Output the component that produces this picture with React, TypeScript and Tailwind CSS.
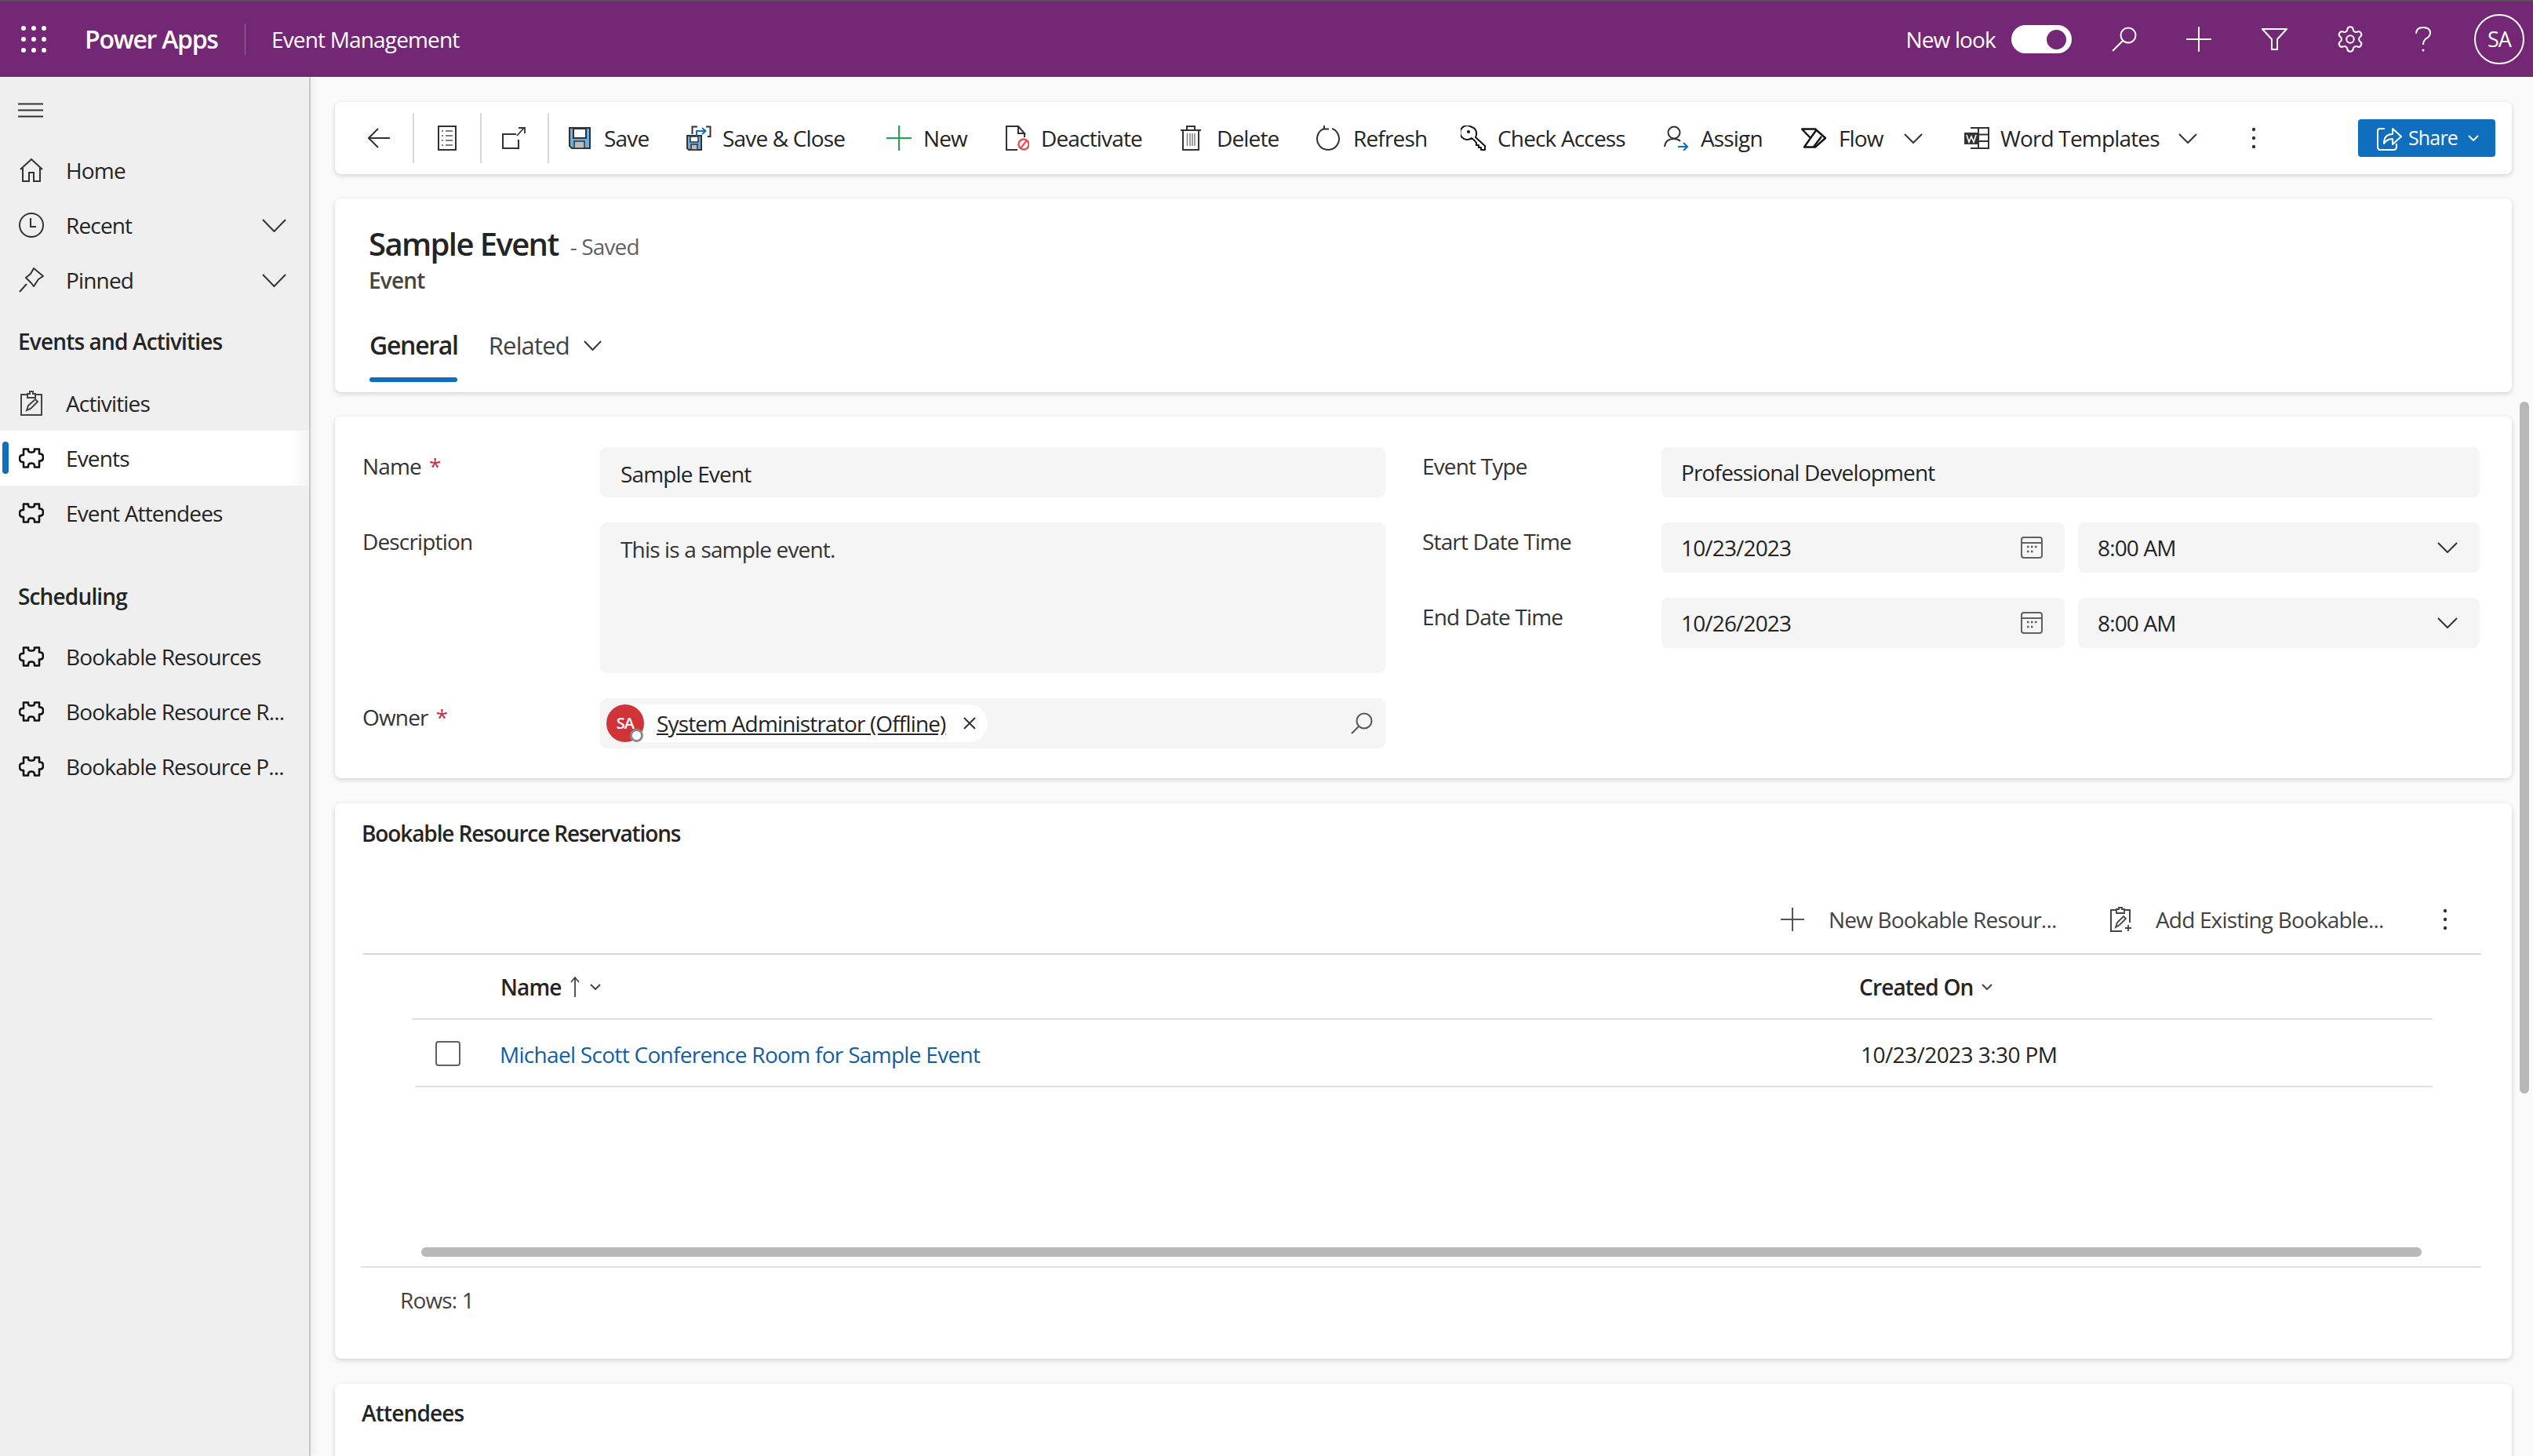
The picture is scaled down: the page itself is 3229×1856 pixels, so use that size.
import * as React from 'react';
import { Settings } from 'lucide-react';

function Ic({ w, h, className, children }: { w: number; h: number; className?: string; children: React.ReactNode }) {
  return (
    <svg width={w} height={h} viewBox={`0 0 ${w} ${h}`} fill="none" className={`shrink-0 ${className ?? ''}`}>
      {children}
    </svg>
  );
}

function Chevron({ w = 26, h = 14, c = '#333', sw = 2 }: { w?: number; h?: number; c?: string; sw?: number }) {
  return (
    <Ic w={w} h={h}>
      <path d={`M1 1 L${w / 2} ${h - 1} L${w - 1} 1`} stroke={c} strokeWidth={sw} />
    </Ic>
  );
}

function Puzzle() {
  return (
    <Ic w={32} h={26}>
      <path
        d="M6 1.5H12V3Q12 5.5 15 5.5H17Q20 5.5 20 3V1.5H26V7.5H27Q31 7.5 31 12Q31 16.5 27 16.5H26V24.5H20V23Q20 19.5 16 19.5Q12 19.5 12 23V24.5H6V18H5Q1 18 1 13.5Q1 9 5 9H6Z"
        stroke="#111"
        strokeWidth="2.6"
        strokeLinejoin="round"
      />
    </Ic>
  );
}

function Search({ c, w = 32, h = 32 }: { c: string; w?: number; h?: number }) {
  return (
    <Ic w={w} h={h}>
      <circle cx={w - 11} cy={11} r={9.5} stroke={c} strokeWidth="2" />
      <path d={`M${w - 18} 18 L1 ${h - 1}`} stroke={c} strokeWidth="2" />
    </Ic>
  );
}

function Kebab({ c = '#333' }: { c?: string }) {
  return (
    <Ic w={6} h={28}>
      <circle cx="3" cy="3" r="2.2" fill={c} />
      <circle cx="3" cy="14" r="2.2" fill={c} />
      <circle cx="3" cy="25" r="2.2" fill={c} />
    </Ic>
  );
}

function Floppy({ small }: { small?: boolean }) {
  return small ? (
    <Ic w={20} h={20}>
      <path d="M1 1H19V19H3L1 17Z" fill="#69afe5" stroke="#333" strokeWidth="2" />
      <rect x="5" y="2" width="10" height="7" fill="#fff" stroke="#333" strokeWidth="1.5" />
      <rect x="6" y="12" width="8" height="7" fill="#bbb" stroke="#333" strokeWidth="1.5" />
    </Ic>
  ) : (
    <Ic w={28} h={28}>
      <path d="M1 1H27V27H4L1 24Z" fill="#69afe5" stroke="#333" strokeWidth="2" />
      <rect x="6" y="2" width="16" height="12" fill="#fff" stroke="#333" strokeWidth="2" />
      <rect x="7" y="18" width="13" height="9" fill="#bbb" stroke="#333" strokeWidth="1.5" />
    </Ic>
  );
}

const saveClose = (
  <div className="relative h-[32px] w-[32px]">
    <div className="absolute bottom-0 left-0 flex">
      <Floppy small />
    </div>
    <Ic w={26} h={18} className="absolute right-0 top-0">
      <path d="M8 1.5H1.5V11M19 1.5H24.5V14H21" stroke="#333" strokeWidth="2" />
      <path d="M7 13V7H18M14 3L18.5 7L14 11" stroke="#106ebe" strokeWidth="2" />
    </Ic>
  </div>
);

const toolItems: { label: string; w: string; gap: string; icon: React.ReactNode; text?: string; chev?: boolean }[] = [
  { label: 'Save', w: 'w-[150px]', gap: 'w-[45px]', icon: <Floppy /> },
  { label: 'Save & Close', w: 'w-[255px]', gap: 'w-[46px]', icon: saveClose },
  {
    label: 'New',
    w: 'w-[152px]',
    gap: 'w-[47px]',
    icon: (
      <Ic w={32} h={32}>
        <path d="M16 0V32M0 16H32" stroke="#1aa64b" strokeWidth="2" />
      </Ic>
    ),
  },
  {
    label: 'Deactivate',
    w: 'w-[223px]',
    gap: 'w-[45px]',
    icon: (
      <Ic w={30} h={32}>
        <path d="M16 11V1H1V31H15M16 1L24 10H16M24 10V15" stroke="#333" strokeWidth="2" />
        <circle cx="23" cy="24" r="6.5" stroke="#e2535f" strokeWidth="2.4" />
        <path d="M19 29L27 19" stroke="#e2535f" strokeWidth="2.4" />
      </Ic>
    ),
  },
  {
    label: 'Delete',
    w: 'w-[172px]',
    gap: 'w-[46px]',
    icon: (
      <Ic w={26} h={32}>
        <path d="M0 6H26M8 6V1H18V6M3 6V31H23V6" stroke="#333" strokeWidth="2" />
        <path d="M8.5 10V26M12 10V26M15 10V26M18 10V26" stroke="#777" strokeWidth="1.4" />
      </Ic>
    ),
  },
  {
    label: 'Refresh',
    w: 'w-[185px]',
    gap: 'w-[48px]',
    icon: (
      <Ic w={32} h={32}>
        <path d="M11 3.9A14 14 0 1 0 21 3.9" stroke="#333" strokeWidth="2" />
        <path d="M11 0V4.500H17" stroke="#333" strokeWidth="2" />
      </Ic>
    ),
  },
  {
    label: 'Check Access',
    w: 'w-[259px]',
    gap: 'w-[47px]',
    icon: (
      <Ic w={34} h={32}>
        <path
          d="M14 16A9 9 0 1 1 14 2Q19 3 20 9Q20.500 12 19 15L31 26V31H26V28H23V25H20V22Q17 18 14 16Z"
          stroke="#111"
          strokeWidth="2"
          strokeLinejoin="round"
        />
        <circle cx="10" cy="8" r="2" fill="#111" />
      </Ic>
    ),
  },
  {
    label: 'Assign',
    w: 'w-[175px]',
    gap: 'w-[47px]',
    icon: (
      <Ic w={32} h={32}>
        <circle cx="13" cy="9" r="7.5" stroke="#333" strokeWidth="2" />
        <path d="M1 27Q2 17 13 17Q18 17 21 20" stroke="#333" strokeWidth="2" />
        <path d="M18 27H30M25 22L30 27L25 32" stroke="#106ebe" strokeWidth="2.2" />
      </Ic>
    ),
  },
  {
    label: 'Flow',
    w: 'w-[208px]',
    gap: 'w-[48px]',
    text: 'w-[83px]',
    chev: true,
    icon: (
      <Ic w={32} h={26}>
        <path d="M1 1.500H18L31 13L18 24.500H4L12 13Z" stroke="#111" strokeWidth="2.4" strokeLinejoin="round" />
        <path d="M12 13L20 2M16 24L26 11" stroke="#111" strokeWidth="2.4" />
      </Ic>
    ),
  },
  {
    label: 'Word Templates',
    w: 'w-[366px]',
    gap: 'w-[46px]',
    text: 'w-[227px]',
    chev: true,
    icon: (
      <Ic w={32} h={28}>
        <path d="M8 1H31V27H8" stroke="#333" strokeWidth="2" />
        <path d="M18 1V27M18 9.500H31M18 18H31" stroke="#333" strokeWidth="2" />
        <rect x="0" y="7" width="18" height="15" fill="#333" />
        <path d="M3 10L6 19L9 12L12 19L15 10" stroke="#fff" strokeWidth="1.6" />
      </Ic>
    ),
  },
];

function NavItem({ label, icon, chev, active }: { label: string; icon: React.ReactNode; chev?: boolean; active?: boolean }) {
  return (
    <div
      className={`relative flex h-[70px] items-center ${active ? 'bg-linear-to-r from-white from-[94%] to-[#f3f3f3]' : ''}`}
    >
      {active && <div className="absolute left-[3px] top-[14px] h-[41px] w-[8px] rounded-[4px] bg-[#106ebe]" />}
      <div className="flex w-[84px] justify-center pr-[4px]">{icon}</div>
      <span className="flex-1">{label}</span>
      {chev && (
        <div className="mr-[29px] flex">
          <Chevron w={31} h={17} />
        </div>
      )}
    </div>
  );
}

function Sidebar() {
  return (
    <aside className="flex w-[396px] shrink-0 flex-col border-r-2 border-[#c8c8c8] bg-[#efefef] pt-[33px] text-[#242424] shadow-[4px_0_10px_rgba(0,0,0,0.06)]">
      <div className="mb-[32px] ml-[23px] flex">
        <Ic w={33} h={19}>
          <path d="M0 1.500H32M0 9.500H32M0 17.500H32" stroke="#333" strokeWidth="2" />
        </Ic>
      </div>
      <NavItem
        label="Home"
        icon={
          <Ic w={30} h={30}>
            <path d="M1 14L15 1L29 14M4 12V29H12V18H18V29H26V12" stroke="#333" strokeWidth="2" />
          </Ic>
        }
      />
      <NavItem
        label="Recent"
        chev
        icon={
          <Ic w={32} h={32}>
            <circle cx="16" cy="16" r="15" stroke="#333" strokeWidth="2" />
            <path d="M15 7V18H22" stroke="#333" strokeWidth="2" />
          </Ic>
        }
      />
      <NavItem
        label="Pinned"
        chev
        icon={
          <Ic w={32} h={32}>
            <path d="M19 1L31 11L25 15L19 24L16 20L9 13L15 8Z" stroke="#333" strokeWidth="2" strokeLinejoin="round" />
            <path d="M10 21L1 31" stroke="#333" strokeWidth="2" />
          </Ic>
        }
      />
      <div className="mb-[24px] ml-[23px] mt-[23px] font-semibold leading-[40px]">Events and Activities</div>
      <NavItem
        label="Activities"
        icon={
          <Ic w={28} h={32}>
            <path d="M9 5H1V31H27V5H19" stroke="#444" strokeWidth="2" />
            <path d="M9 9V4H12V1H16V4H19V9Z" stroke="#444" strokeWidth="2" />
            <path d="M8 25L10 19L19 11L22 14L13 23Z" stroke="#444" strokeWidth="2" />
          </Ic>
        }
      />
      <NavItem label="Events" active icon={<Puzzle />} />
      <NavItem label="Event Attendees" icon={<Puzzle />} />
      <div className="mb-[22px] ml-[23px] mt-[51px] font-semibold leading-[40px]">Scheduling</div>
      <NavItem label="Bookable Resources" icon={<Puzzle />} />
      <NavItem label="Bookable Resource R..." icon={<Puzzle />} />
      <NavItem label="Bookable Resource P..." icon={<Puzzle />} />
    </aside>
  );
}

function Toolbar() {
  const sep = <div className="h-[64px] w-[2px] bg-[#d6d6d6]" />;
  return (
    <div className="flex h-[92px] items-center rounded-[8px] bg-white text-[#242424] shadow-[0_2px_6px_rgba(0,0,0,0.16)]">
      <div className="flex w-[99px] justify-center pl-[12px]">
        <Ic w={28} h={26}>
          <path d="M13 1L1 13L13 25M1 13H28" stroke="#333" strokeWidth="2" />
        </Ic>
      </div>
      {sep}
      <div className="flex w-[84px] justify-center">
        <Ic w={24} h={32}>
          <rect x="1" y="1" width="22" height="30" stroke="#333" strokeWidth="2" />
          <path d="M5 7H7M10 7H19M5 13H7M10 13H19M5 19H7M10 19H19M5 25H7M10 25H19" stroke="#555" strokeWidth="1.6" />
        </Ic>
      </div>
      {sep}
      <div className="flex w-[84px] justify-center pr-[2px]">
        <Ic w={30} h={30}>
          <path d="M18 10H1V28H21V17" stroke="#333" strokeWidth="2" />
          <path d="M19 12L28 2M21 2H29V9" stroke="#333" strokeWidth="1.8" />
        </Ic>
      </div>
      {sep}
      <div className="w-[25px]" />
      {toolItems.map((t) => (
        <div key={t.label} className={`flex items-center ${t.w}`}>
          <div className={`flex ${t.gap}`}>{t.icon}</div>
          <span className={t.text ?? ''}>{t.label}</span>
          {t.chev && <Chevron w={24} h={13} />}
        </div>
      ))}
      <Kebab />
      <div className="ml-auto mr-[21px] flex h-[48px] w-[175px] items-center rounded-[4px] bg-[#106ebe] pl-[24px] text-[25px] text-white">
        <Ic w={32} h={32} className="mr-[8px]">
          <path d="M10 4H4Q1 4 1 7V27Q1 31 4 31H21Q25 31 25 27V23" stroke="#fff" strokeWidth="2" />
          <path d="M9 23Q9 11 20 11V4L31 14L20 24V17Q13 17 9 23Z" stroke="#fff" strokeWidth="2" strokeLinejoin="round" />
        </Ic>
        <span className="w-[76px]">Share</span>
        <Chevron w={14} h={8} c="#fff" />
      </div>
    </div>
  );
}

function TitleCard() {
  return (
    <div className="mt-[31px] flex h-[247px] flex-col rounded-[8px] bg-white pl-[43px] text-[#242424] shadow-[0_2px_6px_rgba(0,0,0,0.16)]">
      <div className="mt-[31px] flex h-[54px] items-center">
        <span className="text-[40px] font-semibold leading-[54px] tracking-[-0.04em]">Sample Event</span>
        <span className="ml-[15px] mt-[6px] text-[#616161]">- Saved</span>
      </div>
      <div className="font-semibold leading-[38px] text-[#444]">Event</div>
      <div className="mt-[38px] flex items-center">
        <div className="ml-[1px] flex flex-col">
          <span className="mt-[4px] text-[32px] font-semibold leading-[44px] tracking-[-0.04em]">General</span>
        </div>
        <span className="ml-[39px] mt-[4px] text-[31px] leading-[44px] text-[#424242]">Related</span>
        <div className="ml-[18px] mt-[4px] flex">
          <Chevron w={23} h={13} />
        </div>
      </div>
      <div className="ml-[1px] mt-[19px] h-[6px] w-[112px] rounded-[3px] bg-[#106ebe]" />
    </div>
  );
}

function Input({ children, w, h = 'h-[64px]', pl = 'pl-[26px]' }: { children: React.ReactNode; w: string; h?: string; pl?: string }) {
  return <div className={`flex items-center rounded-[8px] bg-[#f5f5f5] pr-[14px] text-[#242424] ${w} ${h} ${pl}`}>{children}</div>;
}

function Label({ text, req }: { text: string; req?: boolean }) {
  return (
    <div className="mt-[4px] w-[303px] shrink-0 leading-[40px] text-[#333]">
      {text}
      {req && <span className="ml-[10px] text-[#c4314b]">*</span>}
    </div>
  );
}

function Calendar() {
  return (
    <Ic w={28} h={28} className="ml-auto mr-[14px]">
      <rect x="1" y="1" width="26" height="26" rx="3" stroke="#616161" strokeWidth="2" />
      <path d="M1 8H27" stroke="#616161" strokeWidth="2" />
      <path d="M8 13h2.500M13 13h2.500M18 13h2.500M8 19h2.500M13 19h2.500" stroke="#616161" strokeWidth="2.500" />
    </Ic>
  );
}

function DateRow({ label, date }: { label: string; date: string }) {
  return (
    <div className="flex">
      <Label text={label} />
      <div className="ml-[2px] flex gap-[17px]">
        <Input w="w-[514px]" pl="pl-[25px]">
          {date}
          <Calendar />
        </Input>
        <Input w="w-[512px]" pl="pl-[25px]">
          8:00 AM
          <div className="ml-auto mr-[14px] flex">
            <Chevron w={26} h={14} />
          </div>
        </Input>
      </div>
    </div>
  );
}

function FormCard() {
  return (
    <div className="mt-[31px] flex h-[461px] gap-[47px] rounded-[8px] bg-white pl-[35px] pt-[39px] shadow-[0_2px_6px_rgba(0,0,0,0.16)]">
      <div className="flex w-[1304px] flex-col gap-[32px]">
        <div className="flex">
          <Label text="Name" req />
          <Input w="w-[1001px]">
            <span className="mt-[3px]">Sample Event</span>
          </Input>
        </div>
        <div className="flex">
          <Label text="Description" />
          <div className="h-[192px] w-[1001px] rounded-[8px] bg-[#f5f5f5] pl-[26px] pt-[14px] leading-[40px] text-[#333]">
            This is a sample event.
          </div>
        </div>
        <div className="flex">
          <Label text="Owner" req />
          <Input w="w-[1001px]" pl="pl-[8px]">
            <div className="relative flex h-[48px] w-[486px] items-center rounded-full bg-white">
              <div className="flex h-[48px] w-[48px] items-center justify-center rounded-full bg-[#d13438] text-[20px] font-semibold text-white">
                SA
              </div>
              <div className="absolute left-[30px] top-[31px] h-[17px] w-[17px] rounded-full border-[3px] border-[#8a8a8a] bg-white" />
              <span className="ml-[16px] w-[373px] whitespace-nowrap text-[#242424] underline">System Administrator (Offline)</span>
              <div className="ml-[18px] flex">
                <Ic w={16} h={16}>
                  <path d="M1 1L15 15M15 1L1 15" stroke="#333" strokeWidth="2" />
                </Ic>
              </div>
            </div>
            <div className="ml-auto mr-[2px] flex">
              <Search c="#555" w={28} h={28} />
            </div>
          </Input>
        </div>
      </div>
      <div className="flex w-[1347px] flex-col gap-[32px]">
        <div className="flex">
          <Label text="Event Type" />
          <div className="ml-[2px] flex">
            <Input w="w-[1043px]" pl="pl-[25px]">
              Professional Development
            </Input>
          </div>
        </div>
        <DateRow label="Start Date Time" date="10/23/2023" />
        <DateRow label="End Date Time" date="10/26/2023" />
      </div>
    </div>
  );
}

function GridCard() {
  return (
    <div className="mt-[32px] flex h-[708px] flex-col rounded-[8px] bg-white pt-[18px] text-[#242424] shadow-[0_2px_6px_rgba(0,0,0,0.16)]">
      <div className="ml-[34px] font-semibold leading-[40px] tracking-[-0.04em]">Bookable Resource Reservations</div>
      <div className="mt-[69px] flex h-[64px] items-start justify-start pl-[1843px] text-[#424242]">
        <div className="flex h-[42px] items-center">
          <Ic w={30} h={30} className="mr-[31px]">
            <path d="M15 0V30M0 15H30" stroke="#555" strokeWidth="2" />
          </Ic>
          <span className="w-[359px]">New Bookable Resour...</span>
          <Ic w={28} h={32} className="mr-[30px]">
            <path d="M8 4H1V31H15M18 4H25V20" stroke="#444" strokeWidth="2" />
            <path d="M8 8V3H11V1H15V3H18V8Z" stroke="#444" strokeWidth="1.800" />
            <path d="M7 26L9 20L17 12L20 15L12 23Z" stroke="#444" strokeWidth="1.800" />
            <path d="M19 27H27M23 23V31" stroke="#444" strokeWidth="1.800" />
          </Ic>
          <span className="w-[366px]">Add Existing Bookable...</span>
          <Kebab />
        </div>
      </div>
      <div className="ml-[36px] h-[2px] w-[2700px] bg-[#d6d6d6]" />
      <div className="ml-[98px] flex h-[83px] w-[2576px] items-center border-b-2 border-[#e0e0e0] font-semibold">
        <div className="flex w-[1845px] items-center pl-[113px]">
          <span className="mr-[10px]">Name</span>
          <Ic w={14} h={26} className="mr-[12px]">
            <path d="M7 26V2M2 7L7 1L12 7" stroke="#444" strokeWidth="1.800" />
          </Ic>
          <Chevron w={14} h={8} c="#444" />
        </div>
        <span className="mr-[10px]">Created On</span>
        <Chevron w={14} h={8} c="#444" />
      </div>
      <div className="ml-[102px] flex h-[86px] w-[2572px] items-center border-b-2 border-[#e0e0e0]">
        <div className="ml-[26px] mt-[2px] h-[32px] w-[32px] rounded-[4px] border-2 border-[#616161]" />
        <span className="ml-[50px] mt-[4px] w-[1735px] tracking-[-0.025em] text-[#115ea3]">
          Michael Scott Conference Room for Sample Event
        </span>
        <span className="mt-[4px] tracking-[-0.02em]">10/23/2023 3:30 PM</span>
      </div>
      <div className="ml-[110px] mt-[204px] h-[12px] w-[2550px] rounded-[6px] bg-[#b8b8b8]" />
      <div className="ml-[33px] mt-[12px] h-[2px] w-[2703px] bg-[#e0e0e0]" />
      <div className="ml-[83px] mt-[21px] leading-[40px] text-[#424242]">Rows: 1</div>
    </div>
  );
}

export default function App() {
  return (
    <div className="relative flex h-[1856px] w-[3229px] flex-col overflow-hidden border-t-2 border-[#555] bg-[#fafafa] font-['Open_Sans','Noto_Sans',sans-serif] text-[28px] tracking-[-0.03em]">
      <header className="flex h-[96px] shrink-0 items-center bg-[#742774] text-white">
        <div className="ml-[27px] grid w-[32px] grid-cols-3 gap-x-[7px] gap-y-[8px]">
          {[0, 1, 2, 3, 4, 5, 6, 7, 8].map((i) => (
            <div key={i} className="h-[6px] w-[6px] rounded-full bg-white" />
          ))}
        </div>
        <span className="ml-[49px] w-[204px] text-[32px] font-semibold tracking-[-0.04em]">Power Apps</span>
        <div className="h-[40px] w-[1px] bg-[#a06aa0]" />
        <span className="ml-[33px]">Event Management</span>
        <span className="ml-auto">New look</span>
        <div className="ml-[20px] flex h-[36px] w-[77px] items-center justify-end rounded-full bg-white pr-[7px]">
          <div className="h-[25px] w-[25px] rounded-full bg-[#742774]" />
        </div>
        <div className="ml-[51px] flex">
          <Search c="#fff" />
        </div>
        <div className="ml-[63px] flex">
          <Ic w={32} h={32}>
            <path d="M16 0V32M0 16H32" stroke="#fff" strokeWidth="2" />
          </Ic>
        </div>
        <div className="ml-[64px] flex">
          <Ic w={33} h={28}>
            <path d="M1 1H32L20 14V27H13V14Z" stroke="#fff" strokeWidth="2" />
          </Ic>
        </div>
        <div className="ml-[61px] flex">
          <Settings size={38} color="#fff" strokeWidth={1.3} />
        </div>
        <div className="ml-[64px] flex">
          <Ic w={20} h={32}>
            <path d="M1 9Q1 1 10 1Q19 1 19 8Q19 12 14 15Q10 18 10 23" stroke="#fff" strokeWidth="2" />
            <circle cx="10" cy="30" r="1.500" fill="#fff" />
          </Ic>
        </div>
        <div className="ml-[55px] mr-[11px] flex h-[64px] w-[64px] items-center justify-center rounded-full border-2 border-white text-[27px]">
          SA
        </div>
      </header>
      <div className="flex min-h-0 flex-1">
        <Sidebar />
        <main className="ml-[31px] w-[2775px] pt-[32px]">
          <Toolbar />
          <TitleCard />
          <FormCard />
          <GridCard />
          <div className="mt-[32px] h-[200px] rounded-[8px] bg-white pl-[34px] pt-[17px] font-semibold leading-[40px] text-[#242424] shadow-[0_2px_6px_rgba(0,0,0,0.16)]">
            Attendees
          </div>
        </main>
      </div>
      <div className="absolute left-[3212px] top-[510px] h-[882px] w-[12px] rounded-[6px] bg-[#b8b8b8]" />
    </div>
  );
}
